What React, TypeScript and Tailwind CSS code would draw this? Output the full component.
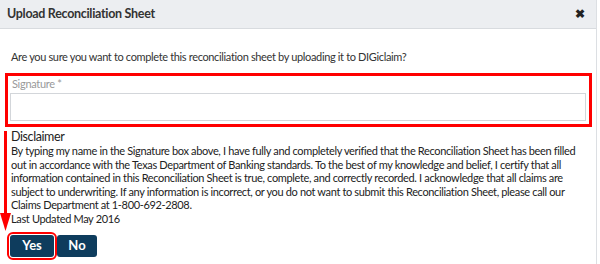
import React from "react";

const lines = [
  "By typing my name in the Signature box above, I have fully and completely verified that the Reconciliation Sheet has been filled",
  "out in accordance with the Texas Department of Banking standards. To the best of my knowledge and belief, I certify that all",
  "information contained in this Reconciliation Sheet is true, complete, and correctly recorded. I acknowledge that all claims are",
  "subject to underwriting. If any information is incorrect, or you do not want to submit this Reconciliation Sheet, please call our",
  "Claims Department at 1-800-692-2808.",
  "Last Updated May 2016",
];

export default function App() {
  return (
    <div className="relative w-[600px] h-[264px] overflow-hidden bg-white text-[#333] font-['Lato','Open_Sans',sans-serif]">
      <div className="w-[597px] h-full border-r border-[#dcdfe3]">
        {/* Header */}
        <div className="h-[29px] bg-[#eceef1] border-b border-[#d8dbdf] flex items-center justify-between pl-[7px] pr-[11px]">
          <h2 className="text-[12.5px] font-bold tracking-[-0.3px] text-[#333]">Upload Reconciliation Sheet</h2>
          <span className="text-[12px] font-bold leading-none text-[#222]">✖</span>
        </div>

        {/* Body */}
        <div className="px-[11px] pt-[21px]">
          <p className="text-[11px] leading-[14px] tracking-[-0.35px] whitespace-nowrap">
            Are you sure you want to complete this reconciliation sheet by uploading it to DIGiclaim?
          </p>

          <div className="-ml-[6px] mr-[-7px] mt-[9px] border-[3px] border-[#ff0000] pl-[2px] pr-[3px] pb-[3px]">
            <label className="block pl-[2px] text-[11px] leading-[15px] tracking-[-0.3px] text-[#999]">Signature *</label>
            <input
              type="text"
              className="mt-[2px] block w-full h-[28px] border border-[#d3d6da] bg-white outline-none"
            />
          </div>

          <h3 className="mt-[2px] text-[12.5px] leading-[15px] tracking-[-0.4px] text-[#222]">Disclaimer</h3>
          <div className="text-[11px] leading-[13.6px] tracking-[-0.35px] text-[#222] whitespace-nowrap">
            {lines.map((l) => (
              <p key={l}>{l}</p>
            ))}
          </div>

          <div className="mt-[9px] -ml-[1px] flex gap-[3px]">
            <button className="w-[44px] h-[22px] rounded-[3px] bg-[#0e3c5d] text-white text-[13px] font-bold outline-[2px] outline-[#ff0000] outline-offset-[1px]">
              Yes
            </button>
            <button className="w-[40px] h-[22px] rounded-[3px] bg-[#0e3c5d] text-white text-[13px] font-bold">
              No
            </button>
          </div>
        </div>
      </div>

      {/* Red annotation arrow */}
      <div className="absolute left-[4px] top-[131px] w-[3px] h-[84px] bg-[#ff0000]" />
      <svg className="absolute left-0 top-[213px]" width="11" height="18" viewBox="0 0 11 18">
        <polygon points="0,0 11,0 5.5,18" fill="#ff0000" />
      </svg>
    </div>
  );
}
